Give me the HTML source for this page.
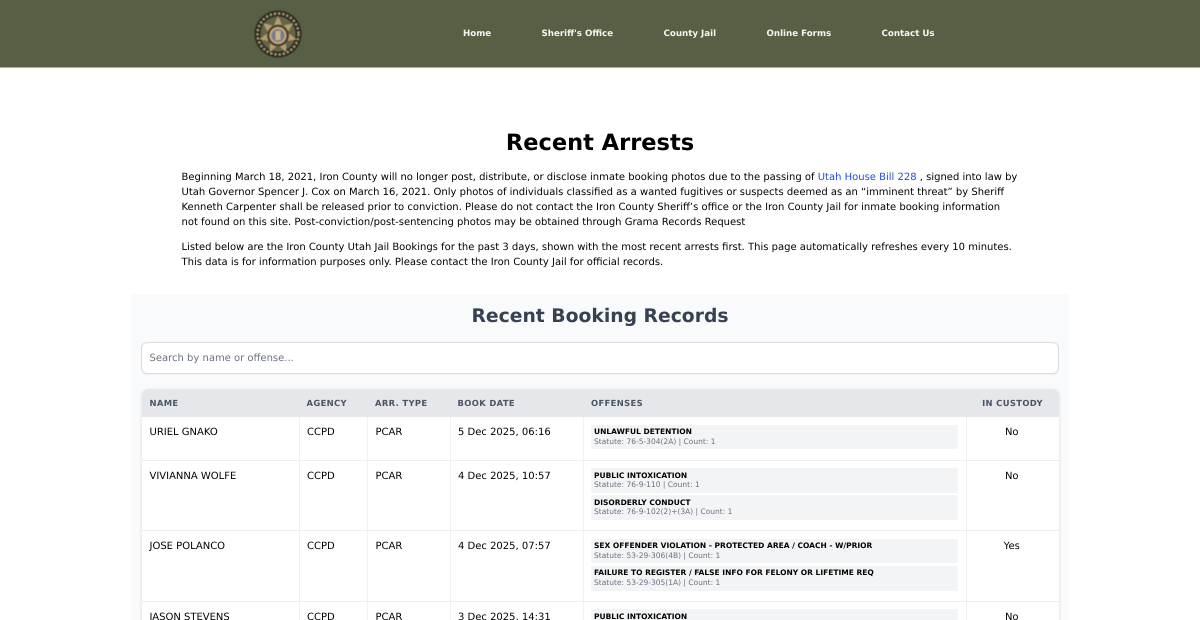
<!DOCTYPE html>
<html><head><meta charset="utf-8"><title>Recent Arrests</title>
<style>
*{box-sizing:border-box}
html,body{margin:0;padding:0;width:1200px;height:620px;overflow:hidden;background:#fff}
#page{position:relative;width:1200px;height:620px;overflow:hidden;background:#fff;font-family:"DejaVu Sans",sans-serif;color:#000;text-rendering:geometricPrecision;filter:blur(.25px)}
.hdr{position:absolute;left:0;top:0;width:1200px;height:67.5px;background:#575f45;border-bottom:1px solid #a9ad9c}
.hdr a{position:absolute;top:28px;font-size:8.7px;line-height:12px;font-weight:700;color:#f4f4f0;text-decoration:none;white-space:nowrap}
.logo{position:absolute;left:250px;top:6px}
h1{position:absolute;left:0;width:1200px;top:127.5px;margin:0;text-align:center;font-size:22.5px;line-height:30px;font-weight:700}
.p{position:absolute;left:181.5px;width:850px;margin:0;font-size:10px;line-height:15px;color:#000;white-space:nowrap}
.p a{color:#1d4ed8;text-decoration:none}
.box{position:absolute;left:131px;top:294px;width:938px;height:340px;background:#f9fafb}
h2{position:absolute;left:0;width:938px;top:10px;margin:0;text-align:center;font-size:18.75px;line-height:26px;font-weight:700;color:#374151}
.search{position:absolute;left:10px;top:48px;width:918px;height:32px;background:#fff;border:1px solid #d9dce1;border-radius:6px;padding-left:7.5px;font-size:10px;line-height:31px;color:#6b7280;box-shadow:0 1px 1px rgba(0,0,0,.03)}
.tw{position:absolute;left:10.5px;top:95px;width:917.5px;height:300px;background:#fff;border-radius:6px 6px 0 0;overflow:hidden;box-shadow:0 1px 3px rgba(0,0,0,.14)}
table{border-collapse:collapse;table-layout:fixed;width:917.5px}
th{height:28px;background:#e5e7eb;color:#4b5563;font-size:8.4px;font-weight:700;letter-spacing:.36px;text-align:left;padding:0 8px 0 7.5px;white-space:nowrap}
th:first-child,td:first-child{padding-left:8px}
td{vertical-align:top;padding:9px 8px 7px 7.5px;font-size:10px;line-height:14px;border-right:1px solid #f0f1f3;border-bottom:1px solid #eceef0;color:#000;white-space:nowrap}
td:last-child{text-align:center;border-right:0;padding-left:7px;padding-right:9px}
th:last-child{text-align:center;border-right:0;padding-left:8px;padding-right:8px}
td.o{padding:7.5px 8px 0 7px}
.of{height:24.8px;background:#f3f4f6;border-radius:2px;padding:2.5px 3px 0;margin-bottom:2.7px;width:366.5px}
.of b{display:block;font-size:7.5px;line-height:9.5px;color:#000}
.of span{display:block;font-size:7.5px;line-height:10px;color:#6b7280}
</style></head><body><div id="page">
<div class="hdr">
<svg class="logo" width="56" height="56" viewBox="0 0 56 56">
<defs><filter id="b" x="-10%" y="-10%" width="120%" height="120%"><feGaussianBlur stdDeviation="0.45"/></filter></defs>
<g filter="url(#b)">
<circle cx="28" cy="28" r="23.5" fill="#2f2a1e"/>
<circle cx="28" cy="28" r="20.5" fill="none" stroke="#a99f80" stroke-width="2.2" stroke-dasharray="2 2.2"/>
<circle cx="28" cy="28" r="17.5" fill="#62664a"/>
<polygon points="28,10 32.3,20 42.9,17.2 37.8,26.8 46.5,33.2 35.8,35.2 36.2,46.1 28,39 19.8,46.1 20.2,35.2 9.5,33.2 18.2,26.8 13.1,17.2 23.7,20" fill="#b89f6c"/>
<circle cx="28" cy="29.5" r="11" fill="#4a3a2a"/>
<circle cx="28" cy="29.5" r="8.5" fill="#c0ad80"/>
<circle cx="28" cy="29.5" r="6.5" fill="#7c7890"/>
<rect x="25.5" y="25" width="5" height="9" fill="#cbb684"/>
</g>
</svg>
<a style="left:463px">Home</a>
<a style="left:541.5px">Sheriff's Office</a>
<a style="left:663.5px">County Jail</a>
<a style="left:766.5px">Online Forms</a>
<a style="left:881.5px">Contact Us</a>
</div>
<h1>Recent Arrests</h1>
<p class="p" style="top:170px">Beginning March 18, 2021, Iron County will no longer post, distribute, or disclose inmate booking photos due to the passing of <a>Utah House Bill 228</a> , signed into law by<br>Utah Governor Spencer J. Cox on March 16, 2021. Only photos of individuals classified as a wanted fugitives or suspects deemed as an “imminent threat” by Sheriff<br>Kenneth Carpenter shall be released prior to conviction. Please do not contact the Iron County Sheriff’s office or the Iron County Jail for inmate booking information<br>not found on this site. Post-conviction/post-sentencing photos may be obtained through Grama Records Request</p>
<p class="p" style="top:240px">Listed below are the Iron County Utah Jail Bookings for the past 3 days, shown with the most recent arrests first. This page automatically refreshes every 10 minutes.<br>This data is for information purposes only. Please contact the Iron County Jail for official records.</p>
<div class="box">
<h2>Recent Booking Records</h2>
<div class="search">Search by name or offense...</div>
<div class="tw">
<table>
<colgroup><col style="width:157.5px"><col style="width:68.5px"><col style="width:82.5px"><col style="width:133.5px"><col style="width:382.5px"><col style="width:93px"></colgroup>
<tr><th>NAME</th><th>AGENCY</th><th>ARR. TYPE</th><th>BOOK DATE</th><th>OFFENSES</th><th>IN CUSTODY</th></tr>
<tr style="height:43px"><td>URIEL GNAKO</td><td>CCPD</td><td>PCAR</td><td>5 Dec 2025, 06:16</td><td class="o"><div class="of"><b>UNLAWFUL DETENTION</b><span>Statute: 76-5-304(2A) | Count: 1</span></div></td><td>No</td></tr>
<tr style="height:70.5px"><td>VIVIANNA WOLFE</td><td>CCPD</td><td>PCAR</td><td>4 Dec 2025, 10:57</td><td class="o"><div class="of"><b>PUBLIC INTOXICATION</b><span>Statute: 76-9-110 | Count: 1</span></div><div class="of"><b>DISORDERLY CONDUCT</b><span>Statute: 76-9-102(2)+(3A) | Count: 1</span></div></td><td>No</td></tr>
<tr style="height:70.5px"><td>JOSE POLANCO</td><td>CCPD</td><td>PCAR</td><td>4 Dec 2025, 07:57</td><td class="o"><div class="of"><b>SEX OFFENDER VIOLATION - PROTECTED AREA / COACH - W/PRIOR</b><span>Statute: 53-29-306(4B) | Count: 1</span></div><div class="of"><b>FAILURE TO REGISTER / FALSE INFO FOR FELONY OR LIFETIME REQ</b><span>Statute: 53-29-305(1A) | Count: 1</span></div></td><td>Yes</td></tr>
<tr style="height:70px"><td>JASON STEVENS</td><td>CCPD</td><td>PCAR</td><td>3 Dec 2025, 14:31</td><td class="o"><div class="of"><b>PUBLIC INTOXICATION</b><span>Statute: 76-9-110 | Count: 1</span></div></td><td>No</td></tr>
</table>
</div>
</div>
</div></body></html>
